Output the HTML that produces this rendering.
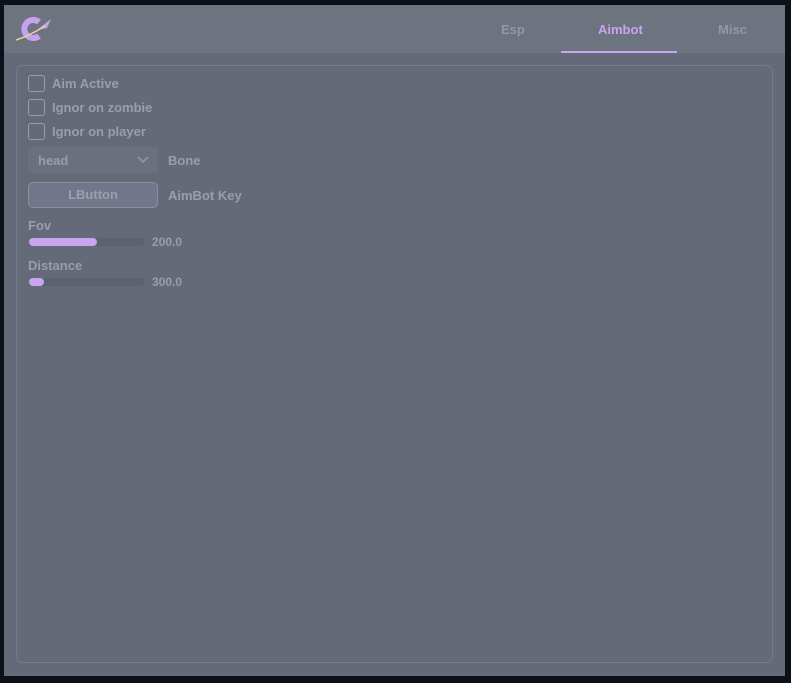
<!DOCTYPE html>
<html><head><style>
body{margin:0;width:791px;height:683px;background:#0b1019;font-family:"Liberation Sans",sans-serif;font-weight:bold;overflow:hidden;position:relative}
.win{position:absolute;left:4px;top:5px;width:781px;height:671px;background:#656a78}
.hdr{position:absolute;left:0;top:0;width:781px;height:48px;background:#6e7380}
.tab{position:absolute;top:17px;font-size:13px;color:#9297a3}
.panel{position:absolute;left:12px;top:60px;width:755px;height:596px;border:1px solid #767b88;border-radius:7px}
.t{position:absolute;font-size:13px;color:#9a9eaa}
.cb{position:absolute;left:24px;width:15px;height:15px;border:1px solid #9a9eaa;border-radius:3px}
.bar{position:absolute;left:25px;width:115px;height:8px;border-radius:4px;background:#5d6270}
.fill{height:8px;border-radius:4px;background:#c9a4f0}
</style></head><body>
<div class="win">
<div class="hdr">
<svg style="position:absolute;left:11px;top:11px" width="40" height="28" viewBox="0 0 40 28">
<path d="M24 6 A9 9 0 1 0 24 20" fill="none" stroke="#c6a2ee" stroke-width="6"/>
<path d="M22 14 L36 3 L32 12 Z" fill="#c6a2ee"/>
<path d="M1 24 Q14 20 30 10" fill="none" stroke="#e6d49a" stroke-width="1.5"/>
</svg>
<div class="tab" style="left:497px">Esp</div>
<div class="tab" style="left:594px;color:#c9a4f0">Aimbot</div>
<div class="tab" style="left:714px">Misc</div>
<div style="position:absolute;left:557px;top:46px;width:116px;height:2px;background:#c9a4f0"></div>
</div>
<div class="panel"></div>
<div class="cb" style="top:70px"></div><div class="t" style="left:48px;top:71px">Aim Active</div>
<div class="cb" style="top:94px"></div><div class="t" style="left:48px;top:95px">Ignor on zombie</div>
<div class="cb" style="top:118px"></div><div class="t" style="left:48px;top:119px">Ignor on player</div>
<div style="position:absolute;left:24px;top:142px;width:130px;height:26px;background:#6b707d;border-radius:4px"></div>
<div class="t" style="left:34px;top:148px">head</div>
<svg style="position:absolute;left:133px;top:151px" width="12" height="8"><path d="M1 1 L6 6 L11 1" fill="none" stroke="#9a9eaa" stroke-width="1.3"/></svg>
<div class="t" style="left:164px;top:148px">Bone</div>
<div style="position:absolute;left:24px;top:177px;width:128px;height:24px;background:#71768a;border:1px solid #8b8fa0;border-radius:5px;text-align:center;line-height:24px;font-size:13px;color:#9ca0ae">LButton</div>
<div class="t" style="left:164px;top:183px">AimBot Key</div>
<div class="t" style="left:24px;top:213px;font-size:13px">Fov</div>
<div class="bar" style="top:233px"><div class="fill" style="width:68px"></div></div>
<div class="t" style="left:148px;top:230px;font-size:12px">200.0</div>
<div class="t" style="left:24px;top:253px;font-size:13px">Distance</div>
<div class="bar" style="top:273px"><div class="fill" style="width:15px"></div></div>
<div class="t" style="left:148px;top:270px;font-size:12px">300.0</div>
</div>
</body></html>
